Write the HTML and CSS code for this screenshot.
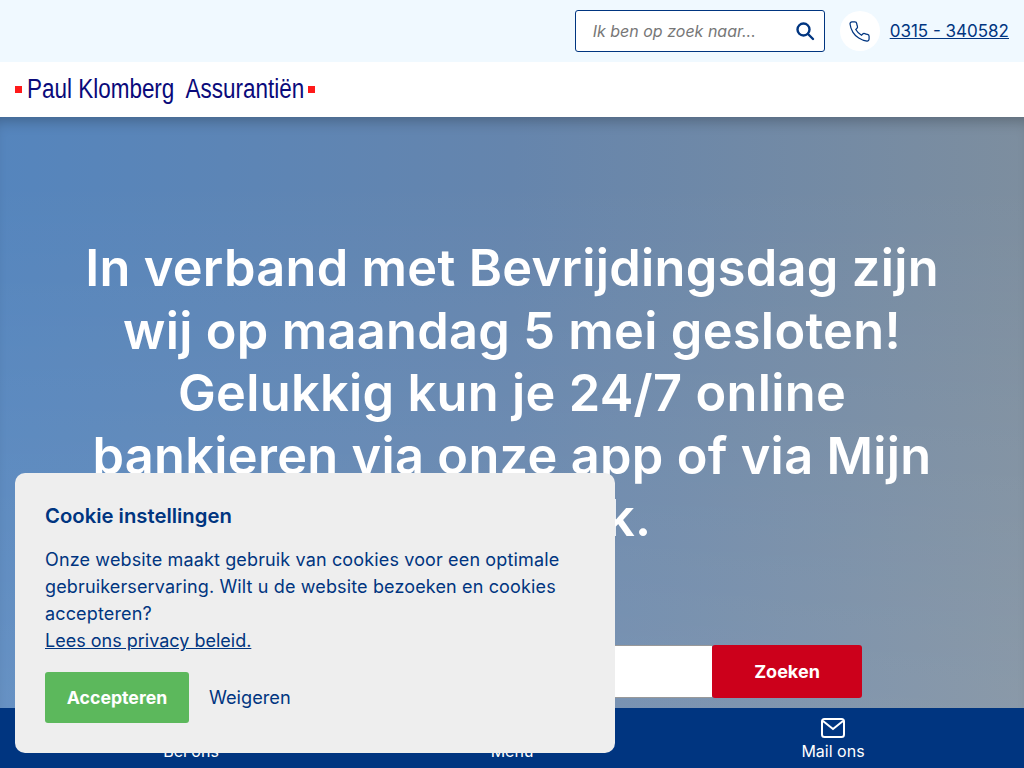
FILE: index.html
```html
<!DOCTYPE html>
<html lang="nl">
<head>
    <meta charset="UTF-8">
    <title>Paul Klomberg Assurantiën</title>
    <link rel="stylesheet" href="styles.css">
</head>
<body>
    <div class="page">
        <div class="topbar">
            <form class="search">
                <span class="search-text">Ik ben op zoek naar...</span>
                <svg class="search-icon" width="20" height="20" viewBox="0 0 20 20" fill="none" stroke="#003580" stroke-width="2.4"><circle cx="8.5" cy="8.5" r="6"/><path d="M13 13l5 5" stroke-linecap="round"/></svg>
            </form>
            <span class="phone-circle">
                <svg width="23" height="23" viewBox="0 0 24 24" fill="none" stroke="#003580" stroke-width="1.300"><path d="M22 16.920v3a2 2 0 0 1-2.180 2 19.790 19.790 0 0 1-8.630-3.070 19.500 19.500 0 0 1-6-6 19.790 19.790 0 0 1-3.070-8.670A2 2 0 0 1 4.110 2h3a2 2 0 0 1 2 1.720 12.840 12.840 0 0 0 .7 2.810 2 2 0 0 1-.45 2.110L8.090 9.910a16 16 0 0 0 6 6l1.270-1.270a2 2 0 0 1 2.110-.45 12.840 12.840 0 0 0 2.810.7A2 2 0 0 1 22 16.920z"/></svg>
            </span>
            <a class="phone-link" href="#">0315 - 340582</a>
        </div>
        <header class="logobar">
            <i class="logo-dot"></i>
            <span class="logo-text">Paul Klomberg&nbsp; Assurantiën</span>
            <i class="logo-dot"></i>
        </header>
        <main class="hero">
            <h1>In verband met Bevrijdingsdag zijn wij op maandag 5 mei gesloten! Gelukkig kun je 24/7 online bankieren via onze app of via Mijn RegioBank.</h1>
            <form class="hero-search">
                <span class="hero-input"></span>
                <button class="hero-button" type="button">Zoeken</button>
            </form>
        </main>
        <nav class="bottomnav">
            <a href="#">Bel ons</a>
            <a href="#">Menu</a>
            <a href="#">
                <svg class="mail-icon" width="26" height="22" viewBox="0 0 26 22" fill="none" stroke="#fff" stroke-width="2"><rect x="2" y="2" width="22" height="18" rx="2.500"/><path d="M3 4l10 8 10-8"/></svg>
                Mail ons
            </a>
        </nav>
    </div>
    <div class="cookie">
        <h2>Cookie instellingen</h2>
        <p>Onze website maakt gebruik van cookies voor een optimale gebruikerservaring. Wilt u de website bezoeken en cookies accepteren?<br><a href="#">Lees ons privacy beleid.</a></p>
        <div class="cookie-actions">
            <button class="accept" type="button">Accepteren</button>
            <a class="refuse" href="#">Weigeren</a>
        </div>
    </div>
</body>
</html>
```

FILE: styles.css
```css
*{
    margin: 0;
    padding: 0;
    box-sizing: border-box;
}
html,body{
    height: 100%;
    overflow: hidden;
}
body{
    font-family: "Inter", "Liberation Sans", sans-serif;
    color: #003580;
}
.page{
    height: 768px;
    display: flex;
    flex-direction: column;
}
.topbar{
    height: 62px;
    background: #f0f9ff;
    display: flex;
    align-items: center;
    justify-content: flex-end;
    padding-right: 15px;
}
.search{
    width: 250px;
    height: 42px;
    background: #fff;
    border: 1px solid #003580;
    border-radius: 3px;
    display: flex;
    align-items: center;
    justify-content: space-between;
    padding: 0 17px;
    margin-right: 15px;
}
.search-text{
    font-size: 16px;
    font-style: italic;
    color: #777;
}
.search-icon{
    margin-right: -8px;
}
.phone-circle{
    width: 40px;
    height: 40px;
    border-radius: 50%;
    background: #fff;
    display: flex;
    align-items: center;
    justify-content: center;
    margin-right: 10px;
}
.phone-link{
    color: #003580;
    font-size: 17px;
}
.logobar{
    height: 55px;
    background: #fff;
    display: flex;
    align-items: center;
    padding-left: 15px;
    gap: 5px;
}
.logo-dot{
    width: 7px;
    height: 7px;
    background: #ff1a1a;
}
/* no narrow font installed, so the wordmark is squeezed */
.logo-text{
    width: 276px;
    font-family: "Liberation Sans", sans-serif;
    font-size: 27px;
    color: #0a0a7a;
    white-space: nowrap;
    transform: scaleX(.832);
    transform-origin: left center;
}
.hero{
    flex: 1;
    background: linear-gradient(180deg, transparent 10%, rgba(255,255,255,.1) 100%), linear-gradient(90deg, #5585bd 0%, #6585ad 50%, #7d8e9f 100%);
    box-shadow: inset 0 12px 14px -8px rgba(0,0,0,.25);
    display: flex;
    flex-direction: column;
    align-items: center;
    padding-top: 120px;
}
.hero h1{
    width: 880px;
    text-align: center;
    color: #fff;
    font-size: 50.500px;
    letter-spacing: .3px;
    line-height: 62.500px;
    font-weight: 600;
}
.hero-search{
    width: 700px;
    height: 53px;
    margin-top: 95px;
    display: flex;
}
.hero-input{
    flex: 1;
    background: #fff;
    border: 1px solid #999;
    border-right: 0;
}
.hero-button{
    width: 150px;
    background: #cc001b;
    color: #fff;
    border: 0;
    border-radius: 3px;
    font: 700 18px "Inter", "Liberation Sans", sans-serif;
}
.bottomnav{
    height: 60px;
    background: #003580;
    display: grid;
    grid-template-columns: repeat(3, 321px);
    justify-content: center;
}
.bottomnav a{
    color: #fff;
    text-decoration: none;
    font-size: 16px;
    display: flex;
    flex-direction: column;
    align-items: center;
    justify-content: flex-end;
    padding-bottom: 7px;
}
.mail-icon{
    margin-bottom: 2px;
}
.cookie{
    position: absolute;
    left: 15px;
    top: 473px;
    width: 600px;
    height: 280px;
    background: #eee;
    border-radius: 10px;
    padding: 30px;
}
.cookie h2{
    font-size: 20.300px;
    line-height: 26px;
    font-weight: 600;
    margin-bottom: 17px;
}
.cookie p{
    font-size: 18px;
    line-height: 27px;
    letter-spacing: .14px;
}
.cookie p a{
    color: #003580;
    letter-spacing: 0;
}
.cookie-actions{
    margin-top: 18px;
    display: flex;
    align-items: center;
    gap: 20px;
}
.accept{
    width: 144px;
    height: 51px;
    background: #5cb85c;
    color: #fff;
    border: 0;
    border-radius: 3px;
    font: 700 17.700px "Inter", "Liberation Sans", sans-serif;
}
.refuse{
    color: #003580;
    font-size: 18.200px;
    text-decoration: none;
    margin-top: -1px;
}
```
